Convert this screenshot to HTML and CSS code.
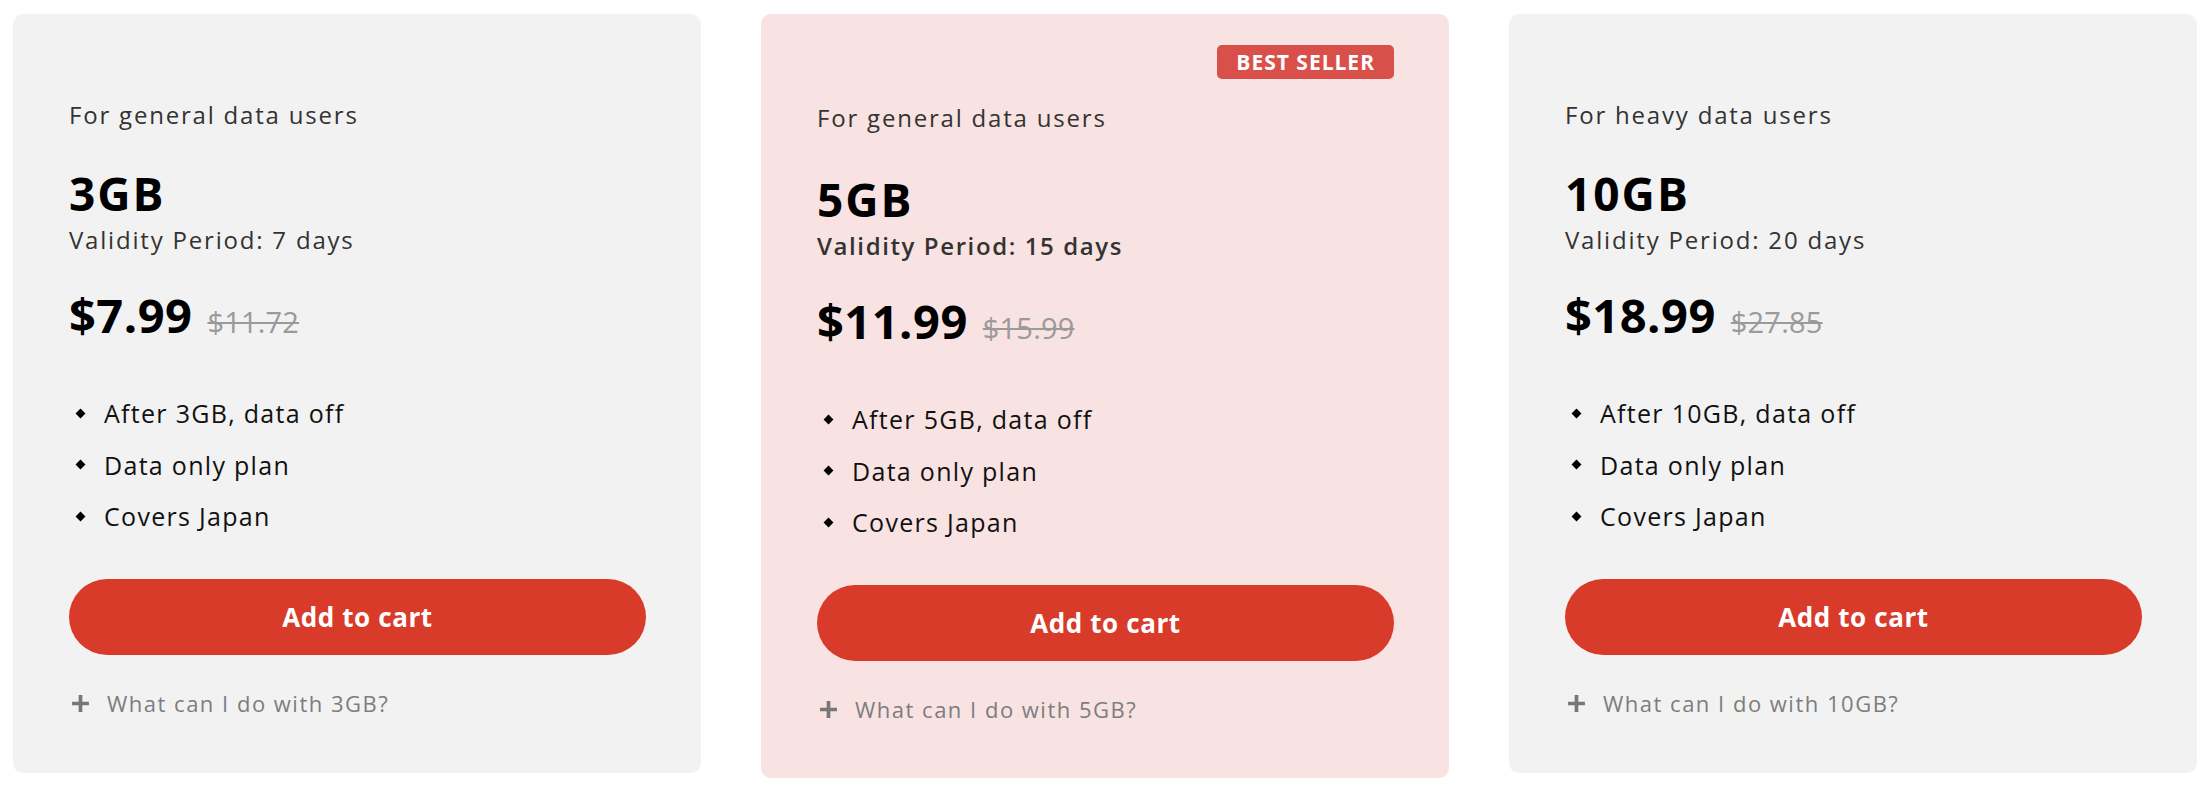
FILE: index.html
```html
<!DOCTYPE html>
<html lang="en">
<head>
<meta charset="utf-8">
<title>Data plans</title>
<link rel="stylesheet" href="styles.css">
</head>
<body>
<main class="plans">
  <section class="card">
    <div class="badge-slot"></div>
    <p class="audience">For general data users</p>
    <h2 class="size">3GB</h2>
    <p class="validity">Validity Period: 7 days</p>
    <div class="price"><span class="now">$7.99</span><span class="was">$11.72</span></div>
    <ul class="features">
      <li>After 3GB, data off</li>
      <li>Data only plan</li>
      <li>Covers Japan</li>
    </ul>
    <button class="cart">Add to cart</button>
    <div class="more"><svg class="plus" viewBox="0 0 18 18"><path d="M9 1v16M1 9h16"/></svg><span>What can I do with 3GB?</span></div>
  </section>
  <section class="card card-featured">
    <div class="badge-slot"><span class="badge">BEST SELLER</span></div>
    <p class="audience">For general data users</p>
    <h2 class="size">5GB</h2>
    <p class="validity">Validity Period: 15 days</p>
    <div class="price"><span class="now">$11.99</span><span class="was">$15.99</span></div>
    <ul class="features">
      <li>After 5GB, data off</li>
      <li>Data only plan</li>
      <li>Covers Japan</li>
    </ul>
    <button class="cart">Add to cart</button>
    <div class="more"><svg class="plus" viewBox="0 0 18 18"><path d="M9 1v16M1 9h16"/></svg><span>What can I do with 5GB?</span></div>
  </section>
  <section class="card">
    <div class="badge-slot"></div>
    <p class="audience">For heavy data users</p>
    <h2 class="size">10GB</h2>
    <p class="validity">Validity Period: 20 days</p>
    <div class="price"><span class="now">$18.99</span><span class="was">$27.85</span></div>
    <ul class="features">
      <li>After 10GB, data off</li>
      <li>Data only plan</li>
      <li>Covers Japan</li>
    </ul>
    <button class="cart">Add to cart</button>
    <div class="more"><svg class="plus" viewBox="0 0 18 18"><path d="M9 1v16M1 9h16"/></svg><span>What can I do with 10GB?</span></div>
  </section>
</main>
</body>
</html>
```

FILE: styles.css
```css
* { box-sizing: border-box; }
html, body { margin: 0; background: #ffffff; }
html { height: 790px; overflow: hidden; }
body {
  padding: 14px 0 0 13px;
  font-family: "Open Sans", "Noto Sans", sans-serif;
  color: #222;
}
.plans {
  display: grid;
  grid-template-columns: repeat(3, 688px);
  column-gap: 60px;
  align-items: start;
}
.card {
  background: #f2f2f2;
  border-radius: 10px;
  padding: 31px 55px 55px 56px;
  display: flex;
  flex-direction: column;
}
.card-featured { background: #f8e2e2; padding-bottom: 54px; }
.badge-slot {
  height: 34px;
  display: flex;
  justify-content: flex-end;
}
.badge {
  background: #d9504a;
  color: #fff;
  font-weight: 700;
  font-size: 21px;
  letter-spacing: 1px;
  line-height: 34px;
  padding: 0 19px;
  border-radius: 5px;
}
.audience {
  margin: 21px 0 0;
  font-size: 24px;
  line-height: 30px;
  color: #333;
  letter-spacing: 1.8px;
}
.card-featured .audience { margin-top: 24px; }
.size {
  margin: 37px 0 0;
  font-size: 46px;
  line-height: 52px;
  font-weight: 700;
  color: #000;
  letter-spacing: 2px;
}
.card-featured .size { margin-top: 40px; }
.validity {
  margin: 6px 0 0;
  font-size: 24px;
  line-height: 30px;
  color: #333;
  letter-spacing: 1.8px;
}
.card-featured .validity { font-weight: 600; letter-spacing: 1.6px; }
.price {
  margin: 32px 0 0;
  display: flex;
  align-items: baseline;
  gap: 15px;
  line-height: 56px;
}
.now {
  font-size: 47px;
  font-weight: 700;
  color: #000;
  letter-spacing: 0.5px;
}
.was {
  font-size: 29px;
  color: #9a9a9a;
  text-decoration: line-through;
  text-decoration-thickness: 2px;
  letter-spacing: 0.2px;
}
.features {
  list-style: none;
  margin: 46px 0 0;
  padding: 0;
  display: flex;
  flex-direction: column;
  gap: 17.5px;
}
.features li {
  display: flex;
  align-items: center;
  gap: 20px;
  font-size: 25px;
  line-height: 34px;
  color: #111;
  letter-spacing: 1.3px;
}
.features li::before {
  content: "";
  width: 7px;
  height: 7px;
  margin-left: 8px;
  background: #000;
  transform: rotate(45deg);
  flex: none;
}
.cart {
  margin-top: 46px;
  height: 76px;
  width: 100%;
  border: none;
  border-radius: 38px;
  background: #d93b2b;
  color: #fff;
  font-family: inherit;
  font-size: 26px;
  font-weight: 700;
  letter-spacing: 0.6px;
  cursor: pointer;
}
.more {
  margin-top: 33px;
  display: flex;
  align-items: center;
  gap: 17px;
  font-size: 22px;
  line-height: 30px;
  color: #7d7d7d;
  letter-spacing: 1.5px;
}
.plus {
  width: 19px;
  height: 19px;
  margin-left: 2px;
  flex: none;
}
.plus path {
  stroke: #777;
  stroke-width: 3.5;
  fill: none;
}
```
